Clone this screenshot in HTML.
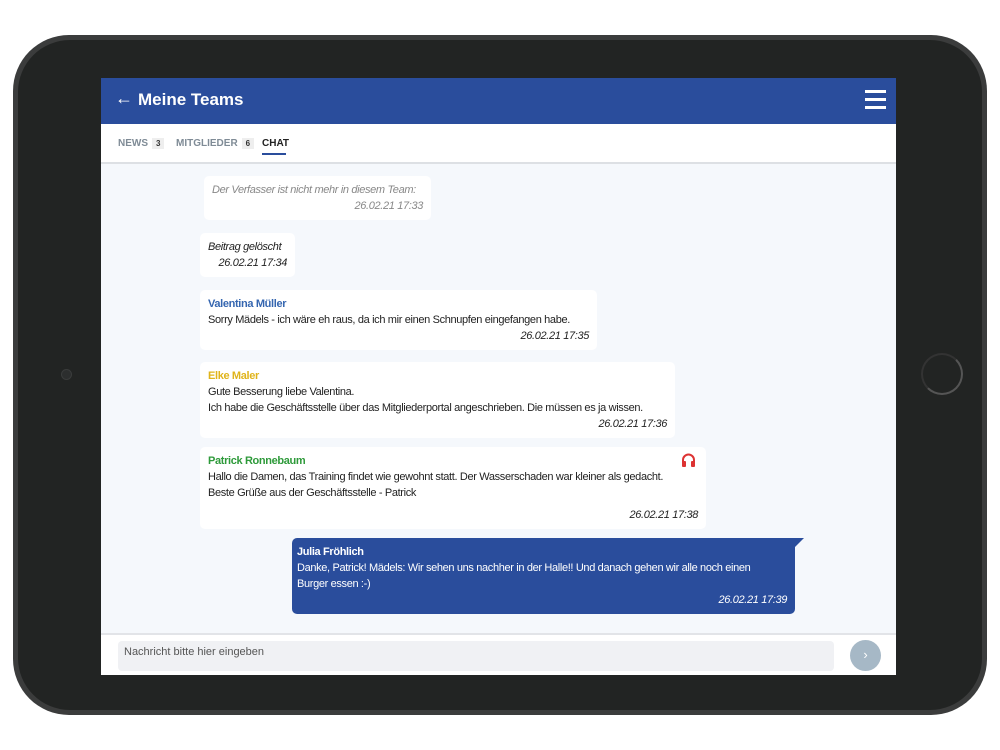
<!DOCTYPE html>
<html><head><meta charset="utf-8"><style>
*{margin:0;padding:0;box-sizing:border-box}
body{width:1000px;height:750px;background:#fff;position:relative;overflow:hidden;font-family:"Liberation Sans",sans-serif}
.frame{position:absolute;left:13px;top:35px;width:974px;height:680px;border-radius:56px;background:#3b3c3c}
.inner{position:absolute;left:18px;top:40px;width:964px;height:670px;border-radius:52px;background:#222423}
.cam{position:absolute;left:61px;top:369px;width:11px;height:11px;border-radius:50%;background:#2c2e2e;border:1px solid #3a3c3c}
.home{position:absolute;left:921px;top:353px;width:42px;height:42px;border-radius:50%;border:2px solid #555;border-left-color:#333;border-top-color:#333}
.screen{position:absolute;left:101px;top:78px;width:795px;height:597px;background:#f5f8fc;overflow:hidden}
.hdr{position:absolute;left:0;top:0;width:795px;height:46px;background:#2a4d9c;color:#fff}
.hdr .t{position:absolute;left:37px;top:12px;font-size:17px;font-weight:bold}
.hdr .ar{position:absolute;left:14px;top:10px;font-size:18px}
.burg{position:absolute;right:10px;top:12px;width:21px}
.burg i{display:block;height:3px;background:#fff;margin-bottom:5px}
.tabs{position:absolute;left:0;top:46px;width:795px;height:40px;background:#fff;border-bottom:2px solid #dde0e4;font-size:10px;font-weight:bold;color:#7f8b96}
.tabs span{position:absolute;top:14px}
.b{display:inline-block;background:#eee;color:#333;font-size:8px;padding:1px 4px;margin-left:4px}
.msg{position:absolute;background:#fff;border-radius:5px;font-size:11px;letter-spacing:-0.35px;color:#222;padding:6px 8px;line-height:16px;white-space:nowrap}
.d{text-align:right;font-style:italic}
.n{font-weight:bold}
.inp{position:absolute;left:0;top:555px;width:795px;height:42px;background:#fff;border-top:2px solid #e2e4e8}
.box{position:absolute;left:17px;top:6px;width:716px;height:30px;background:#f0f1f4;border-radius:4px;font-size:11px;color:#555;padding:5px 6px}
.send{position:absolute;left:749px;top:5px;width:31px;height:31px;border-radius:50%;background:#a6b8c6;color:#fff;text-align:center;line-height:30px;font-size:13px}
</style></head><body>
<div class="frame"></div><div class="inner"></div>
<div class="cam"></div><div class="home"></div>
<div class="screen">
<div class="hdr"><span class="ar">&#8592;</span><span class="t">Meine Teams</span><div class="burg"><i></i><i></i><i></i></div></div>
<div class="tabs"><span style="left:17px">NEWS<b class="b">3</b></span><span style="left:75px">MITGLIEDER<b class="b">6</b></span><span style="left:161px;color:#222">CHAT</span><div style="position:absolute;left:161px;top:29px;width:24px;height:2px;background:#2a4d9c"></div></div>
<div class="msg" style="left:103px;top:98px;width:227px;color:#888;font-style:italic">Der Verfasser ist nicht mehr in diesem Team:<div class="d">26.02.21 17:33</div></div>
<div class="msg" style="left:99px;top:155px;width:95px;font-style:italic">Beitrag gelöscht<div class="d">26.02.21 17:34</div></div>
<div class="msg" style="left:99px;top:212px;width:397px"><div class="n" style="color:#3566b0">Valentina Müller</div>Sorry Mädels - ich wäre eh raus, da ich mir einen Schnupfen eingefangen habe.<div class="d">26.02.21 17:35</div></div>
<div class="msg" style="left:99px;top:284px;width:475px"><div class="n" style="color:#e0b41b">Elke Maler</div>Gute Besserung liebe Valentina.<br>Ich habe die Geschäftsstelle über das Mitgliederportal angeschrieben. Die müssen es ja wissen.<div class="d">26.02.21 17:36</div></div>
<div class="msg" style="left:99px;top:369px;width:506px"><div class="n" style="color:#2e9a3a">Patrick Ronnebaum</div>Hallo die Damen, das Training findet wie gewohnt statt. Der Wasserschaden war kleiner als gedacht.<br>Beste Grüße aus der Geschäftsstelle - Patrick<div class="d" style="margin-top:6px">26.02.21 17:38</div>
<svg style="position:absolute;right:10px;top:6px" width="15" height="16" viewBox="0 0 15 16"><path d="M2 10V7a5.5 5.5 0 0 1 11 0v3" fill="none" stroke="#d33" stroke-width="2"/><rect x="1" y="8" width="4" height="6" rx="1" fill="#d33"/><rect x="10" y="8" width="4" height="6" rx="1" fill="#d33"/></svg></div>
<div class="msg" style="left:191px;top:460px;width:503px;background:#2a4d9c;color:#fff;border-top-right-radius:0;padding-left:5px"><div class="n">Julia Fröhlich</div>Danke, Patrick! Mädels: Wir sehen uns nachher in der Halle!! Und danach gehen wir alle noch einen<br>Burger essen :-)<div class="d">26.02.21 17:39</div>
<div style="position:absolute;right:-9px;top:0;width:0;height:0;border-top:9px solid #2a4d9c;border-right:9px solid transparent"></div></div>
<div class="inp"><div class="box">Nachricht bitte hier eingeben</div><div class="send">&#8250;</div></div>
</div>
</body></html>
